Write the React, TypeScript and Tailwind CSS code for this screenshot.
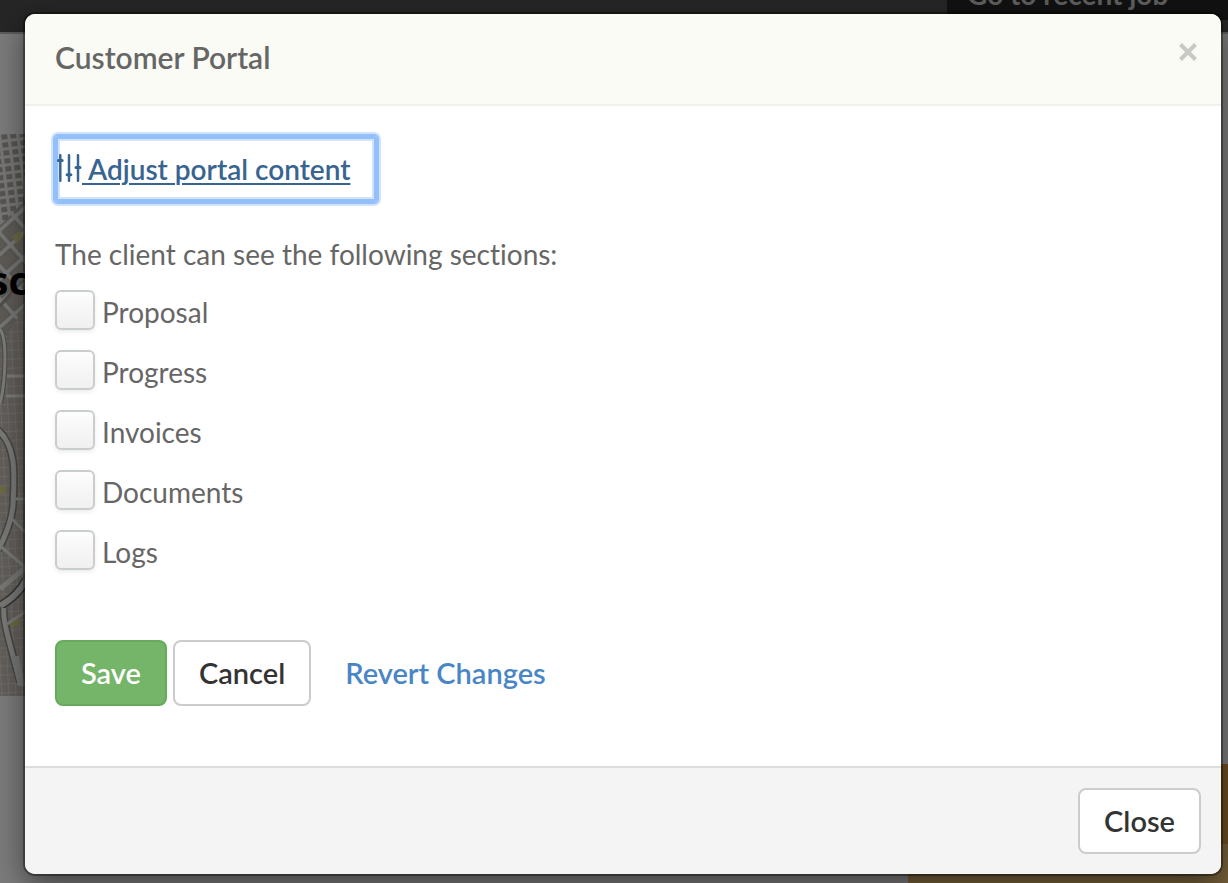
import React, { useState } from "react";

const sections = ["Proposal", "Progress", "Invoices", "Documents", "Logs"];

function SlidersIcon() {
  return (
    <svg width="27" height="30" viewBox="0 0 27 30" fill="none" stroke="currentColor" strokeLinecap="round" className="shrink-0" aria-hidden="true">
      <path d="M5.3 1.2v25.6M14 1.2v25.6M23 1.2v25.6" strokeWidth="2.5" />
      <path d="M3.4 6.5h3.8M12.1 20.8h3.8M21 13.5h4" strokeWidth="3" />
    </svg>
  );
}

function MapStrip() {
  return (
    <svg width="25" height="562" viewBox="0 0 25 562" className="block" aria-hidden="true">
      <defs>
        <pattern id="blocks" width="9" height="8" patternUnits="userSpaceOnUse" patternTransform="rotate(-7)">
          <rect width="9" height="8" fill="#767675" />
          <rect x="1" y="1" width="6" height="5" fill="#575451" />
        </pattern>
        <pattern id="diagonal" width="22" height="18" patternUnits="userSpaceOnUse" patternTransform="rotate(-42)">
          <rect width="22" height="18" fill="#777776" />
          <rect x="2" y="2" width="17" height="13" fill="#5e5b57" stroke="#504e4b" />
        </pattern>
        <pattern id="streets" width="7" height="9" patternUnits="userSpaceOnUse" patternTransform="rotate(-3)">
          <rect width="7" height="9" fill="#625f5b" />
          <path d="M0 0H7M0 0V9" stroke="#777573" strokeWidth="1" />
        </pattern>
      </defs>
      <rect width="25" height="562" fill="url(#streets)" />
      <rect width="25" height="90" fill="url(#blocks)" />
      <path d="M0 92L25 66V170L0 215Z" fill="url(#diagonal)" />
      <path d="M12 103l7-6 5 5-7 8z" fill="#6a6a45" />
      <path d="M0 172C12 158 18 150 25 146" stroke="#504e4b" strokeWidth="3" fill="none" />
      <path d="M0 195C8 206 5 250 0 270" stroke="#4c4b49" strokeWidth="5" fill="none" />
      <path d="M0 195C8 206 5 250 0 270" stroke="#7b7b7a" strokeWidth="3" fill="none" />
      <path d="M7 242H25M6 262H25" stroke="#7b7b7a" strokeWidth="3" />
      <path d="M0 352h6v8H0z" fill="#6a6a45" />
      <path d="M-2 296C18 314 14 345 13 372C11 390 4 405 -2 416" stroke="#464544" strokeWidth="8" fill="none" />
      <path d="M-2 296C18 314 14 345 13 372C11 390 4 405 -2 416" stroke="#797978" strokeWidth="5" fill="none" />
      <path d="M13 365H25M12 385L25 398M0 412L25 433" stroke="#797978" strokeWidth="3" />
      <path d="M0 455L25 434" stroke="#777776" strokeWidth="5" />
      <path d="M8 490l10-6 3 6-9 4z" fill="#6a6a45" />
      <path d="M0 472C12 465 20 458 26 446" stroke="#353534" strokeWidth="9" fill="none" />
      <path d="M0 472C12 465 20 458 26 446" stroke="#777776" strokeWidth="6" fill="none" />
      <path d="M4 474C2 485 10 510 20 548" stroke="#464544" strokeWidth="8" fill="none" />
      <path d="M4 474C2 485 10 510 20 548" stroke="#797978" strokeWidth="5" fill="none" />
      <path d="M7 490L25 478" stroke="#777776" strokeWidth="3" />
      <path d="M11 522h8l6 30h-7z" fill="#777776" />
    </svg>
  );
}

function Backdrop() {
  return (
    <div className="absolute inset-0 flex flex-col overflow-hidden bg-[#7b7b7b]" aria-hidden="true">
      <div className="flex h-[34px] shrink-0 items-start justify-end border-b-2 border-[#5c5c5c] bg-[#262626]">
        <div className="flex h-5 w-[281px] items-end overflow-hidden bg-[#111111] pl-5">
          <span className="-translate-y-3 whitespace-nowrap text-[28px] leading-7 font-bold text-[#5e5e5e]">Go to recent job</span>
        </div>
      </div>
      <div className="flex grow flex-col pt-[100px]">
        <div className="relative w-[25px]">
          <MapStrip />
          <span className="absolute top-[126px] -right-1 font-['Open_Sans',sans-serif] text-[40px] leading-10 font-bold text-black">sc</span>
        </div>
      </div>
      <div className="absolute right-0 bottom-0 flex h-[119px] w-80 flex-col bg-[#6b4e20]">
        <div className="mt-20 grow bg-[#76603a]" />
      </div>
    </div>
  );
}

const outlineButton =
  "h-[66px] cursor-pointer rounded-lg border-2 border-[#cccccc] bg-white px-6 text-[29px] leading-8 font-semibold text-[#333333]";

export default function App() {
  const [checked, setChecked] = useState<Record<string, boolean>>({});

  return (
    <div className="relative min-h-screen overflow-hidden font-[Lato,sans-serif] [font-variant-ligatures:no-common-ligatures]">
      <Backdrop />
      <div className="relative pt-[14px] pr-[7px] pb-[9px] pl-[25px]">
        <div
          role="dialog"
          aria-labelledby="dialog-title"
          className="overflow-hidden rounded-[10px] bg-white shadow-[0_0_0_2px_rgba(0,0,0,0.35),0_10px_30px_rgba(0,0,0,0.5)]"
        >
          <header className="flex h-[92px] items-start justify-between border-b-2 border-[#f0f0ec] bg-[#fafbf5] pt-6 pr-[19px] pl-[30px]">
            <h1 id="dialog-title" className="text-[30px] leading-[38px] font-semibold text-[#666666]">Customer Portal</h1>
            <button type="button" aria-label="Dismiss" className="flex size-7 cursor-pointer items-center justify-center text-[#c8c9c4]">
              <svg width="20" height="20" viewBox="0 0 20 20" stroke="currentColor" strokeWidth="4" aria-hidden="true">
                <path d="M2.5 2.5l15 15M17.5 2.5l-15 15" />
              </svg>
            </button>
          </header>

          <main className="px-[30px] pt-[30px] pb-[60px] text-[28px] leading-10 text-[#666666]">
            <a
              href="#content"
              className="inline-flex h-[66px] items-center rounded-[3px] pr-[27px] font-semibold text-[#386492] shadow-[0_0_0_2px_#93c0fa,0_0_0_4px_#d0e3fb,inset_0_0_0_3px_#93c0fa,inset_0_0_0_5px_#d0e3fb]"
            >
              <SlidersIcon />
              <span className="whitespace-pre underline decoration-2 underline-offset-3"> Adjust portal content</span>
            </a>

            <p className="mt-8">The client can see the following sections:</p>
            <ul className="mt-4 flex flex-col gap-5">
              {sections.map((name) => (
                <li key={name}>
                  <label className="flex h-10 items-center gap-[7px]">
                    <input
                      type="checkbox"
                      checked={!!checked[name]}
                      onChange={(e) => setChecked({ ...checked, [name]: e.target.checked })}
                      className="size-10 shrink-0 appearance-none rounded-md border-2 border-[#c9cdcb] bg-linear-to-b from-[#fdfdfd] to-[#f0f0f0] shadow-[0_2px_4px_rgba(0,0,0,0.08)] checked:to-[#75b56a]"
                    />
                    <span className="pt-1">{name}</span>
                  </label>
                </li>
              ))}
            </ul>

            <div className="mt-[70px] flex items-center text-[29px]">
              <button
                type="button"
                className="h-[66px] cursor-pointer rounded-lg border-2 border-[#67aa5b] bg-[#75b56a] px-6 leading-8 font-semibold text-white"
              >
                Save
              </button>
              <button type="button" className={outlineButton + " ml-[6px]"}>Cancel</button>
              <button type="button" className="ml-[34px] cursor-pointer font-semibold text-[#4a86c5]">Revert Changes</button>
            </div>
          </main>

          <footer className="flex justify-end border-t-2 border-[#dddddd] bg-[#f4f4f4] p-5">
            <button type="button" className={outlineButton}>Close</button>
          </footer>
        </div>
      </div>
    </div>
  );
}
